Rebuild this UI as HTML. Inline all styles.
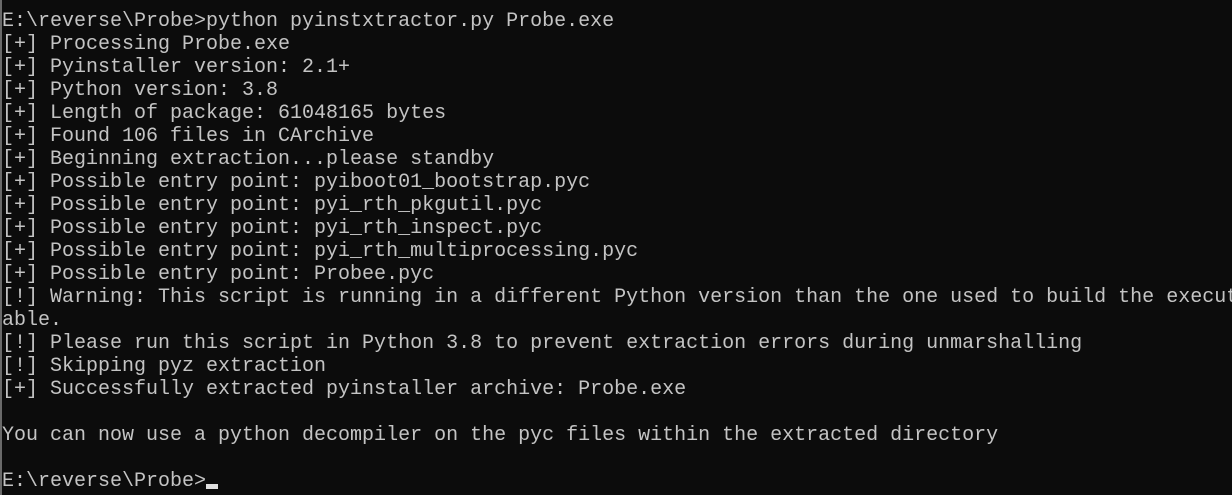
<!DOCTYPE html>
<html><head><style>
html,body{margin:0;padding:0;}
body{width:1232px;height:495px;background:#0c0c0c;overflow:hidden;position:relative;border-left:2px solid #6a6a6a;box-sizing:border-box;}
pre{margin:0;position:absolute;left:0px;top:10px;font-family:"Liberation Mono",monospace;font-size:20px;line-height:23px;color:#c4c4c4;white-space:pre;}
.cur{position:absolute;left:204px;top:484px;width:12px;height:5px;background:#e0e0e0;}
</style></head><body>
<pre>E:\reverse\Probe&gt;python pyinstxtractor.py Probe.exe
[+] Processing Probe.exe
[+] Pyinstaller version: 2.1+
[+] Python version: 3.8
[+] Length of package: 61048165 bytes
[+] Found 106 files in CArchive
[+] Beginning extraction...please standby
[+] Possible entry point: pyiboot01_bootstrap.pyc
[+] Possible entry point: pyi_rth_pkgutil.pyc
[+] Possible entry point: pyi_rth_inspect.pyc
[+] Possible entry point: pyi_rth_multiprocessing.pyc
[+] Possible entry point: Probee.pyc
[!] Warning: This script is running in a different Python version than the one used to build the executa
able.
[!] Please run this script in Python 3.8 to prevent extraction errors during unmarshalling
[!] Skipping pyz extraction
[+] Successfully extracted pyinstaller archive: Probe.exe

You can now use a python decompiler on the pyc files within the extracted directory

E:\reverse\Probe&gt;</pre>
<div class="cur"></div>
</body></html>
